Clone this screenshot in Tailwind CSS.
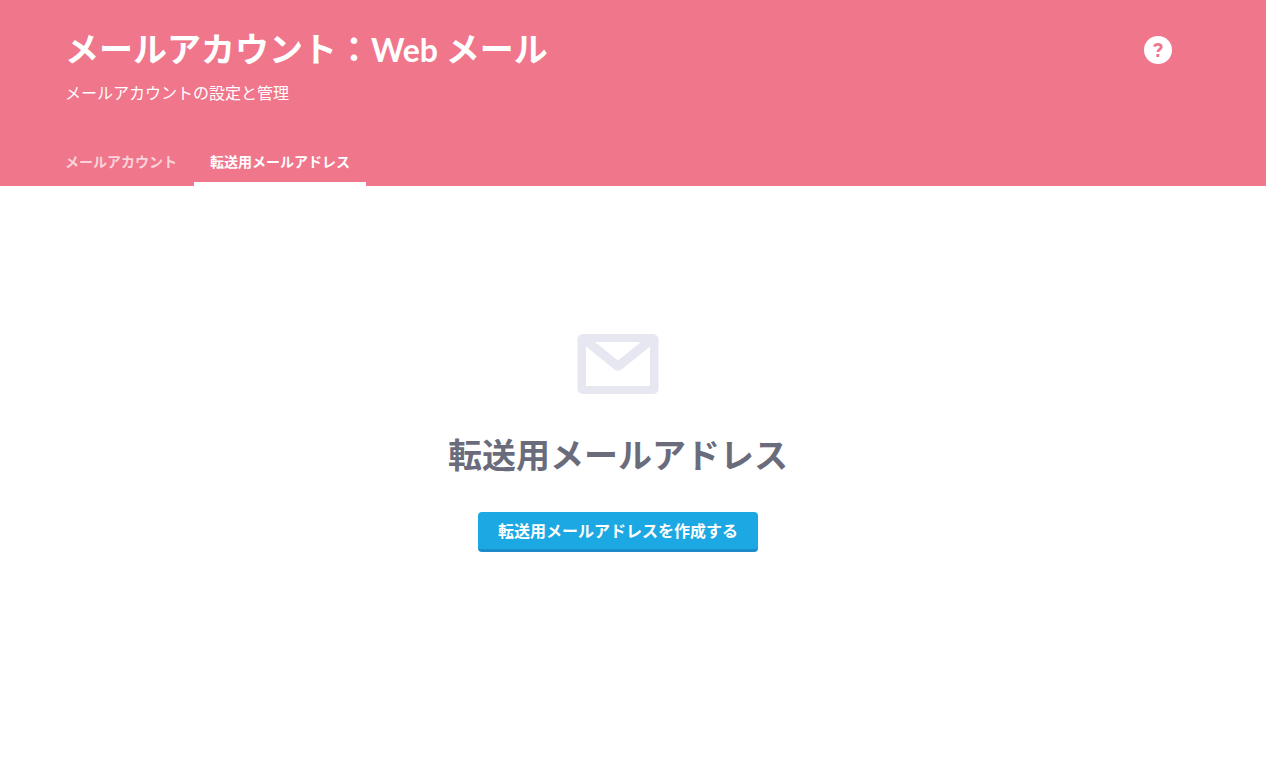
<!DOCTYPE html>
<html lang="ja">

<head>
  <meta charset="UTF-8" />
  <meta name="viewport" content="width=device-width, initial-scale=1.0" />
  <title>メールアカウント：Web メール</title>
  <script src="https://cdn.jsdelivr.net/npm/@tailwindcss/browser@4"></script>
</head>

<body class="min-h-screen bg-white font-['Lato','Noto_Sans_CJK_JP',sans-serif]">
  <header class="bg-[#f0768b] pl-[65px] pr-[94px] pt-[23px] text-white">
    <div class="flex items-start justify-between">
      <div>
        <h1 class="text-[34px] leading-[52px] font-bold">メールアカウント：<span class="text-[32px]">Web </span>メール</h1>
        <p class="mt-1 text-base leading-[26px]">メールアカウントの設定と管理</p>
      </div>
      <button type="button" aria-label="ヘルプ" class="mt-[13px] size-7 shrink-0">
        <svg viewBox="0 0 28 28" class="size-7" fill="none">
          <circle cx="14" cy="14" r="14" fill="#fff" />
          <path d="M10.400 10.700C10.800 9.100 12 8.400 14 8.400c2 0 3.200 1 3.200 2.600 0 2.600-3.300 2.300-3.300 5.100" stroke="#f0768b" stroke-width="2.800" />
          <path d="M12.300 18h3v3h-3z" fill="#f0768b" />
        </svg>
      </button>
    </div>

    <!-- Tabs -->
    <nav class="-ml-4 mt-[34px] flex gap-px text-sm leading-5 font-bold">
      <a href="#" class="border-b-4 border-transparent px-4 pt-3 pb-[10px] text-white/70">メールアカウント</a>
      <a href="#" aria-current="page" class="border-b-4 border-white px-4 pt-3 pb-[10px]">転送用メールアドレス</a>
    </nav>
  </header>

  <!-- Empty state -->
  <main class="flex flex-col items-center pl-16 pr-[94px] pt-[148px]">
    <svg viewBox="0 0 82 60" class="h-[60px] w-[82px]" fill="none" aria-hidden="true">
      <path fill="#e7e7f1" fill-rule="evenodd" d="M6 0h70a5.500 5.500 0 0 1 5.500 5.500v49a5.500 5.500 0 0 1-5.500 5.500H6a5.500 5.500 0 0 1-5.500-5.500v-49A5.500 5.500 0 0 1 6 0zM18 8l23 18.500L64 8zM9 12.500V52h64V12.500L45.200 35a6.500 6.500 0 0 1-8.400 0z" />
    </svg>
    <h2 class="mt-9 text-[34px] leading-[50px] font-bold text-[#6b6c7b]">転送用メールアドレス</h2>
    <button type="button" class="mt-8 h-10 rounded-sm border-b-[3px] border-[#1c8ccb] bg-[#1ca8e2] px-5 text-base font-bold text-white">転送用メールアドレスを作成する</button>
  </main>
</body>

</html>
